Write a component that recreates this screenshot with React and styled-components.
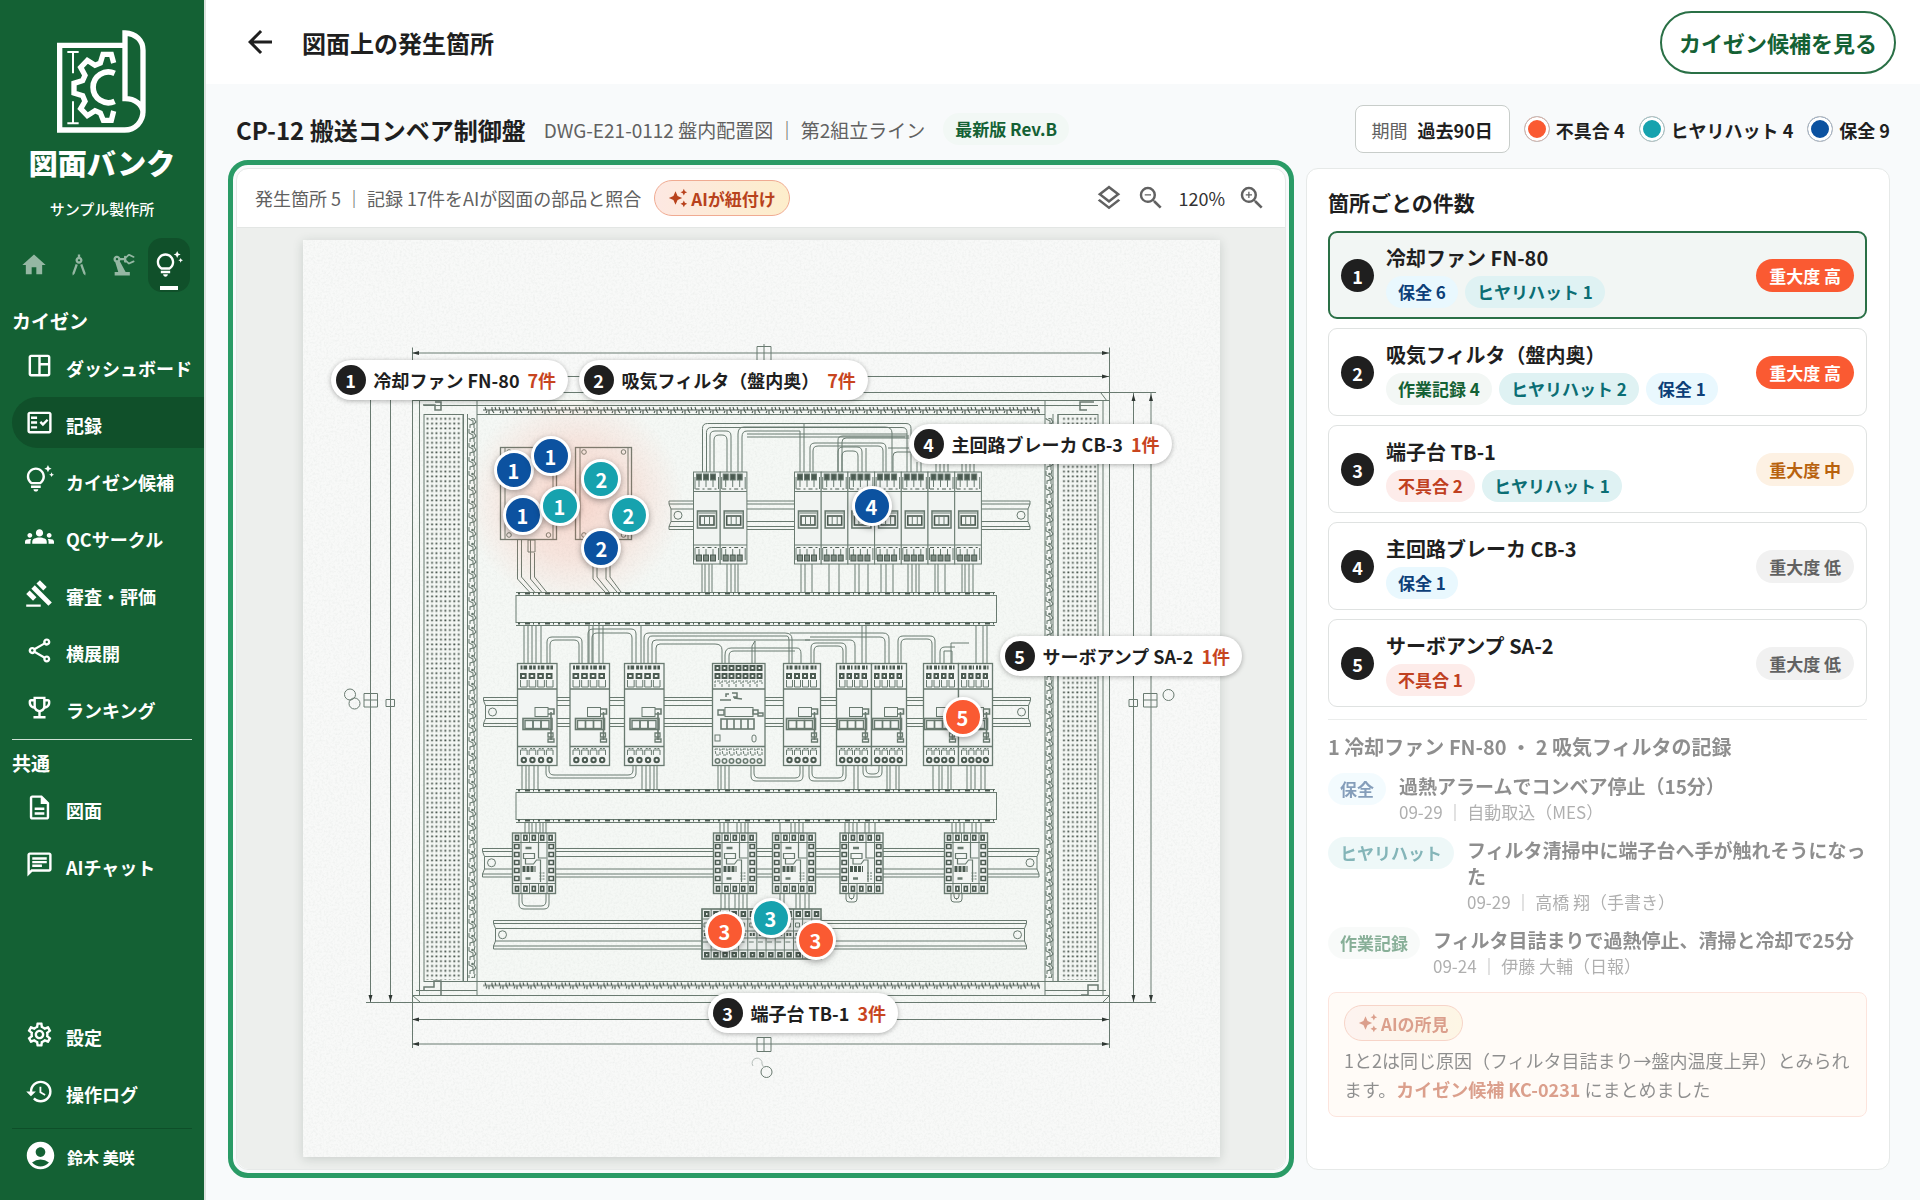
import React from 'react';
import styled, { createGlobalStyle, css } from 'styled-components';
import {
  MdAccountCircle,
  MdArchitecture,
  MdArrowBack,
  MdAutoAwesome,
  MdGavel,
  MdGroups,
  MdHistory,
  MdHome,
  MdOutlineChat,
  MdOutlineDescription,
  MdOutlineEmojiEvents,
  MdOutlineFactCheck,
  MdOutlineLayers,
  MdOutlineSettings,
  MdOutlineShare,
  MdOutlineSpaceDashboard,
  MdOutlineTipsAndUpdates,
  MdPrecisionManufacturing,
  MdZoomIn,
  MdZoomOut
} from 'react-icons/md';

const GlobalStyle = createGlobalStyle`
  *, *::before, *::after {
    box-sizing: border-box;
  }
  body {
    margin: 0;
    background: #f8fafb;
    color: #1f1f1f;
    font-family: 'Noto Sans CJK JP', 'Noto Sans', sans-serif;
    font-size: 18px;
  }
  button {
    font: inherit;
    color: inherit;
    cursor: pointer;
  }
  a {
    color: inherit;
    text-decoration: none;
  }
  h1, h2, h3, p, ul {
    margin: 0;
    padding: 0;
  }
  ul {
    list-style: none;
  }
`;

const kindColors = {
  defect: { solid: '#fa5a32', text: '#c0401f', soft: '#fdecea' },
  nearMiss: { solid: '#17a2ae', text: '#0b6e74', soft: '#dff2f3' },
  upkeep: { solid: '#0c52a0', text: '#0d3f78', soft: '#e9f8fe' },
  work: { solid: '#146134', text: '#146134', soft: '#f3f7f5' }
};

const severityColors = {
  high: { text: '#ffffff', back: '#fa5a32' },
  mid: { text: '#b8620e', back: '#fdf1e3' },
  low: { text: '#616161', back: '#f1f1f1' }
};

const Shell = styled.div`
  display: grid;
  grid-template-columns: 206px minmax(0, 1fr);
  min-height: 100vh;
`;

/* ---------- sidebar ---------- */

const Sidebar = styled.aside`
  display: flex;
  flex-direction: column;
  border-right: 2px solid #dde2df;
  background: #146134;
  color: #ffffff;
`;

const Brand = styled.div`
  display: flex;
  flex-direction: column;
  align-items: center;
  padding-top: 29px;
`;

const BrandName = styled.div`
  margin-top: 7px;
  font-size: 29px;
  line-height: 40px;
  font-weight: 900;
`;

const Company = styled.div`
  margin-top: 12px;
  font-size: 15px;
  line-height: 30px;
  font-weight: 500;
`;

const AreaTabs = styled.nav`
  display: flex;
  justify-content: space-between;
  align-items: center;
  margin-top: 14px;
  padding: 0 14px 0 13px;
`;

const AreaTab = styled.a`
  display: flex;
  align-items: center;
  justify-content: center;
  width: 42px;
  height: 54px;
  border-radius: 14px;
  font-size: 28px;
  color: rgba(255, 255, 255, 0.55);

  ${({ $active }) =>
    $active &&
    css`
      background: linear-gradient(#ffffff, #ffffff) center 48px / 18px 4px no-repeat #10502a;
      color: #ffffff;
    `}
`;

const NavHeading = styled.h2`
  margin: ${({ $first }) => ($first ? '14px' : '0')} 0 4px;
  padding: 0 12px;
  font-size: 19px;
  line-height: 30px;
  font-weight: 700;
`;

const NavList = styled.ul`
  display: flex;
  flex-direction: column;
  gap: 6px;
  padding-left: 12px;
`;

const NavLink = styled.a`
  display: flex;
  align-items: center;
  gap: 12px;
  height: 51px;
  padding-left: 13px;
  border-radius: 26px 0 0 26px;
  white-space: nowrap;
  font-weight: 700;
  background: ${({ $active }) => ($active ? '#10502a' : 'transparent')};

  svg {
    flex: none;
    font-size: 29px;
  }
  span {
    padding-top: 4px;
  }
`;

const NavRule = styled.hr`
  width: calc(100% - 24px);
  margin: 6px 0 8px 12px;
  border: 0;
  border-top: 1px solid #cfe0d5;
`;

const SidebarFoot = styled.div`
  margin-top: auto;
  padding-bottom: 20px;
`;

const FootRule = styled(NavRule)`
  margin: 11px 0 1px 12px;
  border-top-color: #0e4f29;
`;

const UserLink = styled(NavLink)`
  height: 50px;
  margin-left: 12px;
  padding-left: 12px;
  gap: 10px;
  font-size: 16px;

  svg {
    font-size: 33px;
  }
`;

/* ---------- page frame ---------- */

const Page = styled.div`
  display: flex;
  flex-direction: column;
`;

const TopBar = styled.header`
  display: flex;
  align-items: center;
  gap: 24px;
  height: 84px;
  padding: 0 24px 0 36px;
  background: #ffffff;
`;

const TopTitle = styled.h1`
  flex: 1;
  font-size: 24px;
  font-weight: 700;
`;

const IconButton = styled.button`
  display: flex;
  padding: 0;
  border: 0;
  background: none;
  font-size: ${({ $size }) => $size}px;
`;

const OutlineButton = styled.button`
  height: 63px;
  padding: 0 17px;
  border: 2px solid #2a7046;
  border-radius: 32px;
  background: #ffffff;
  color: #146134;
  font-size: 22px;
  font-weight: 700;
`;

const Body = styled.main`
  flex: 1;
  display: flex;
  flex-direction: column;
  padding: 0 30px 30px;
`;

const TitleRow = styled.div`
  display: flex;
  align-items: center;
  justify-content: space-between;
  padding: 21px 0 15px;
`;

const TitleGroup = styled.div`
  display: flex;
  align-items: center;
  gap: 18px;
`;

const DrawingTitle = styled.h2`
  font-size: 24px;
  font-weight: 700;
`;

const DrawingMeta = styled.span`
  color: #616161;
  font-size: 19px;
`;

const RevPill = styled.span`
  padding: 0 12px;
  border-radius: 16px;
  background: #f2f8f5;
  color: #146134;
  font-size: 17px;
  line-height: 32px;
  font-weight: 700;
`;

const Filters = styled.div`
  display: flex;
  align-items: center;
  gap: 14px;
`;

const PeriodButton = styled.button`
  display: flex;
  align-items: center;
  gap: 10px;
  height: 48px;
  padding: 2px 16px 0;
  border: 1px solid #c8cdca;
  border-radius: 8px;
  background: #ffffff;
  font-weight: 700;

  span {
    color: #616161;
    font-weight: 400;
  }
`;

const LegendItem = styled.span`
  display: flex;
  align-items: center;
  gap: 6px;
  font-weight: 700;

  span {
    padding-top: 2px;
  }
`;

const LegendDot = styled.i`
  width: 26px;
  height: 26px;
  border: 1px solid #c0c0c0;
  border-radius: 50%;
  background: ${({ $kind }) => kindColors[$kind].solid};
  box-shadow: inset 0 0 0 3px #ffffff;
`;

const Columns = styled.div`
  flex: 1;
  display: grid;
  grid-template-columns: minmax(0, 1050fr) minmax(0, 584fr);
  gap: 20px;
`;

const Card = styled.section`
  border: 1px solid #e6e9e8;
  border-radius: 12px;
  background: #ffffff;
`;

/* ---------- drawing viewer ---------- */

const Viewer = styled(Card)`
  display: flex;
  flex-direction: column;
  outline: 5px solid #2a9b66;
  outline-offset: 3px;
`;

const ViewerBar = styled.div`
  display: flex;
  align-items: center;
  gap: 13px;
  height: 59px;
  padding: 0 18px;
  border-bottom: 1px solid #e3e6e4;
  color: #616161;
`;

const ViewerTools = styled.div`
  display: flex;
  align-items: center;
  gap: 12px;
  margin-left: auto;

  span {
    color: #333333;
  }
`;

const AiPill = styled.span`
  display: inline-flex;
  align-items: center;
  gap: 3px;
  height: 36px;
  padding: 0 13px;
  border: 1px solid #f0ab92;
  border-radius: 18px;
  background: linear-gradient(90deg, #fde8e2, #fdeecb);
  color: #b8421c;
  font-size: 17px;
  font-weight: 700;

  svg {
    font-size: 20px;
  }
`;

const Stage = styled.div`
  flex: 1;
  display: flex;
  justify-content: center;
  align-items: center;
  padding: 12px 0;
  border-radius: 0 0 12px 12px;
  background: #edefed;
`;

const Sheet = styled.div`
  position: relative;
  width: 87.5%;
  aspect-ratio: 1;
  background: #f8f9f8;
  box-shadow: 0 2px 10px rgba(40, 60, 50, 0.18);
`;

const DrawingSvg = styled.svg`
  display: block;
  width: 100%;
  height: 100%;
`;

const Pin = styled.button`
  position: absolute;
  width: 40px;
  height: 40px;
  padding: 0;
  border: 3px solid #ffffff;
  border-radius: 50%;
  background: ${({ $kind }) => kindColors[$kind].solid};
  box-shadow: 0 2px 6px rgba(0, 0, 0, 0.35);
  color: #ffffff;
  font-size: 20px;
  line-height: 36px;
  font-weight: 700;
  transform: translate(-50%, -50%);
`;

const Callout = styled.div`
  position: absolute;
  display: flex;
  align-items: center;
  gap: 8px;
  height: 40px;
  padding: 0 12px 0 5px;
  border-radius: 20px;
  background: #ffffff;
  box-shadow: 0 1px 5px rgba(0, 0, 0, 0.3);
  white-space: nowrap;
  font-weight: 700;

  em {
    color: #c8451f;
    font-style: normal;
  }
`;

const NumberBadge = styled.span`
  flex: none;
  width: ${({ $size }) => $size}px;
  height: ${({ $size }) => $size}px;
  border-radius: 50%;
  background: #1f1f1f;
  color: #ffffff;
  text-align: center;
  line-height: ${({ $size }) => $size + 1}px;
  font-weight: 700;
`;

/* ---------- side card ---------- */

const SideCard = styled(Card)`
  padding: 18px 22px 20px 21px;
`;

const SideTitle = styled.h2`
  font-size: 21px;
  line-height: 30px;
  font-weight: 700;
`;

const SpotList = styled.ul`
  display: flex;
  flex-direction: column;
  gap: 9px;
  margin-top: 14px;
`;

const SpotButton = styled.button`
  display: flex;
  align-items: center;
  gap: 12px;
  width: 100%;
  height: 88px;
  padding: 0 ${({ $active }) => ($active ? 11 : 12)}px;
  border: ${({ $active }) => ($active ? '2px solid #2a7046' : '1px solid #dfe2e1')};
  border-radius: 9px;
  background: ${({ $active }) => ($active ? '#f2f6f4' : '#ffffff')};
  text-align: left;
`;

const SpotText = styled.span`
  flex: 1;
  display: flex;
  flex-direction: column;
  gap: 3px;
`;

const SpotName = styled.span`
  font-size: 20px;
  line-height: 30px;
  font-weight: 700;
`;

const Tags = styled.span`
  display: flex;
  gap: 7px;
`;

const Tag = styled.span`
  flex: none;
  padding: 0 12px;
  border-radius: 16px;
  background: ${({ $kind }) => kindColors[$kind].soft};
  color: ${({ $kind }) => kindColors[$kind].text};
  font-size: 17px;
  line-height: 32px;
  font-weight: 700;
`;

const Severity = styled.span`
  padding: 0 13px;
  border-radius: 17px;
  background: ${({ $level }) => severityColors[$level].back};
  color: ${({ $level }) => severityColors[$level].text};
  font-size: 17px;
  line-height: 33px;
  font-weight: 700;
`;

const Detail = styled.div`
  margin-top: 12px;
  border-top: 1px solid #d9dcdb;
  opacity: 0.5;
`;

const DetailTitle = styled.h3`
  margin-top: 12px;
  font-size: 20px;
  line-height: 30px;
  font-weight: 700;
`;

const Records = styled.ul`
  display: flex;
  flex-direction: column;
  gap: 13px;
  margin-top: 11px;
`;

const RecordRow = styled.li`
  display: flex;
  align-items: flex-start;
  gap: 13px;
`;

const RecordTitle = styled.p`
  font-size: 19px;
  line-height: 26px;
  font-weight: 700;
`;

const RecordMeta = styled.p`
  color: #616161;
  font-size: 17px;
  line-height: 25px;
`;

const AiNote = styled.div`
  margin-top: 14px;
  padding: 12px 14px 12px 15px;
  border: 1px solid #fbcabc;
  border-radius: 8px;
  background: #fff8f0;
`;

const AiNoteText = styled.p`
  margin-top: 5px;
  line-height: 29px;

  a {
    color: #b8421c;
    font-weight: 700;
  }
`;

/* ---------- drawing parts ---------- */

const LINE = '#697a70';
const INK = '#4b5a51';

// n values spaced evenly from start
const steps = (n, start, gap) => Array.from({ length: n }, (_, i) => start + i * gap);

function Wires({ xs, y1, y2 }) {
  return <path d={xs.map((x) => `M${x} ${y1}V${y2}`).join('')} />;
}

// Nested bridge of wires between two terminals, from outside in
function Bridge({ x1, x2, top, bottom, n = 2, gap = 4, r = 5 }) {
  return (
    <path
      d={steps(n, 0, gap)
        .map((o) => {
          const up = bottom > top ? 1 : -1;
          const t = top + o * up;
          return `M${x1 + o} ${bottom}V${t + r * up}Q${x1 + o} ${t} ${x1 + o + r} ${t}H${x2 - o - r}Q${x2 - o} ${t} ${x2 - o} ${t + r * up}V${bottom}`;
        })
        .join('')}
    />
  );
}

function Rail({ x1, x2, y, h }) {
  return (
    <g>
      <path
        d={`M${x1} ${y}H${x2}V${y + 3}L${x2 - 2} ${y + 8}V${y + h - 8}L${x2} ${y + h - 3}V${y + h}H${x1}V${y + h - 3}L${x1 + 2} ${y + h - 8}V${y + 8}L${x1} ${y + 3}Z`}
      />
      <path d={`M${x1} ${y + 3}H${x2}M${x1 + 2} ${y + 8}H${x2 - 2}M${x1 + 2} ${y + h - 8}H${x2 - 2}M${x1} ${y + h - 3}H${x2}`} />
      <circle cx={x1 + 9} cy={y + h / 2} r="4" />
      <circle cx={x2 - 9} cy={y + h / 2} r="4" />
    </g>
  );
}

function Duct({ y }) {
  return (
    <g>
      <rect x="516" y={y} width="480.5" height="27" />
      <path d={`M516 ${y - 3}H995M516 ${y + 30}H995`} />
      <path d={`M518 ${y - 2}H995M518 ${y + 28}H995`} stroke={INK} strokeWidth="2" strokeDasharray="2 5 5 3 1 4" />
    </g>
  );
}

function Breaker({ x }) {
  const cells = steps(3, x + 3, 7);
  return (
    <g>
      <rect x={x} y="472" width="26.7" height="92" fill="#f1f4f2" />
      <path d={`M${x} 491.5h26.7M${x} 545h26.7M${x + 1.5} 489v-12M${x + 25} 489v-12M${x + 1.5} 548v12M${x + 25} 548v12`} />
      {cells.map((cx) => (
        <g key={cx}>
          <rect x={cx} y="474" width="5" height="6" fill={INK} />
          <path d={`M${cx + 2.5} 480v7M${cx + 2.5} 549v6`} />
          <rect x={cx} y="555" width="5" height="6" fill="#7d8a82" stroke={INK} />
        </g>
      ))}
      <path d={`M${x + 2} 489h22M${x + 2} 547.5h22`} strokeDasharray="4 3 2 3" stroke={INK} />
      <rect x={x + 4} y="511" width="19" height="17" strokeWidth="1.6" />
      <rect x={x + 6.5} y="516" width="14" height="9" strokeWidth="1.6" stroke={INK} />
      <path d={`M${x + 5} 513h17M${x + 11} 516v9M${x + 16} 516v9`} />
    </g>
  );
}

function Relay({ x, w, n = 4 }) {
  const gap = (w - 5) / n;
  const cells = steps(n, x + 3, gap);
  const mid = x + w - 35;
  return (
    <g>
      <rect x={x} y="663.5" width={w} height="102" fill="#f2f5f3" strokeWidth="1.3" />
      <path d={`M${x} 689h${w}M${x} 746.5h${w}`} strokeWidth="1.4" />
      {cells.map((cx, i) => (
        <g key={cx}>
          <path d={`M${cx} 667.5h${gap - 2}`} strokeWidth="4" stroke={INK} strokeDasharray={i % 2 ? '3 1' : '2 1 4'} />
          <rect x={cx + 0.5} y="674" width={gap - 4} height="4" strokeWidth="2" stroke={INK} />
          <path d={`M${cx} 680v7h${gap - 2}v-7M${cx} 755v-5h${gap - 2}v5`} />
          <path d={`M${cx + 1} 748.5h${gap - 3}`} strokeDasharray="2 1" />
          <circle cx={cx + gap / 2 - 1} cy="760" r="2.2" strokeWidth="2" stroke={INK} />
        </g>
      ))}
      <rect x={mid + 13} y="707.5" width="13" height="9" />
      <path d={`M${mid + 26} 709h6v5h-6M${mid + 29} 712v28`} strokeWidth="1.6" />
      <rect x={mid + 1} y="718.5" width="29" height="11" strokeWidth="1.6" />
      <rect x={mid + 3} y="720.5" width="8" height="8" strokeWidth="1.4" />
      <rect x={mid + 11} y="720.5" width="8" height="8" strokeWidth="1.4" />
      <rect x={mid + 19} y="720.5" width="8" height="8" strokeWidth="1.4" />
      <path d={`M${mid + 26} 733h5v4h-5zM${mid + 26} 739h6v3h-6z`} strokeWidth="1.3" />
    </g>
  );
}

function Controller() {
  return (
    <g>
      <rect x="712.5" y="663.5" width="52.5" height="102" fill="#f2f5f3" strokeWidth="1.3" />
      <path d="M712.5 689h52.5M712.5 746.5h52.5" strokeWidth="1.4" />
      {steps(7, 715, 7).map((cx) => (
        <g key={cx}>
          <rect x={cx + 0.5} y="666" width="4" height="4" strokeWidth="2" stroke={INK} />
          <rect x={cx + 0.5} y="674" width="4" height="4" strokeWidth="2" stroke={INK} />
          <path d={`M${cx} 687v-6h5v3M${cx} 749h5v6h-4z`} strokeDasharray="3 1" />
          <circle cx={cx + 2.5} cy="761" r="2.2" strokeWidth="1.6" />
        </g>
      ))}
      <path d="M726 697v-3h3M732 693h5v4h-4M720 700h11M734 698l8 1" strokeWidth="1.5" />
      <rect x="725" y="707.5" width="28" height="9" />
      <path d="M718 710h6v5h-6zM753 710h5v4h-5zM758 713h5v3h-5z" strokeWidth="1.4" />
      <rect x="721" y="719" width="33" height="10" strokeWidth="1.6" />
      <path d="M727 719v10M734 719v10M741 719v10M748 719v10" strokeWidth="1.6" />
      <rect x="715" y="735" width="5" height="6" />
      <rect x="752" y="735" width="4" height="7" rx="2" />
    </g>
  );
}

function Timer({ x }) {
  const cells = steps(5, x + 2, 8.4);
  return (
    <g>
      <rect x={x} y="833" width="43" height="60.5" fill="#f2f5f3" strokeWidth="1.4" />
      <path d={`M${x} 842.5h43M${x} 883.5h43M${x + 8.5} 833v60.5M${x + 34.5} 833v60.5M${x + 17} 833v9.5M${x + 26} 833v9.5M${x + 17} 883.5v10M${x + 26} 883.5v10`} />
      {cells.map((cx) => (
        <g key={cx} strokeWidth="1.7" stroke={INK}>
          <rect x={cx + 1} y="835.5" width="3" height="4.5" />
          <rect x={cx + 1} y="886.5" width="3" height="4.5" />
        </g>
      ))}
      {steps(5, 844.5, 8).map((cy) => (
        <g key={cy} strokeWidth="1.5" stroke={INK}>
          <rect x={x + 2} y={cy} width="4.5" height="4" />
          <rect x={x + 36.5} y={cy} width="4.5" height="4" />
        </g>
      ))}
      <path d={`M${x + 13} 848h6M${x + 13} 878.5h5`} strokeWidth="2.5" />
      <path d={`M${x + 11} 853.5h11v5h-11zM${x + 13} 859v5h8l3-4h4v22M${x + 26} 843v15h8`} strokeWidth="1.2" />
      <path d={`M${x + 10} 869h13`} stroke={INK} strokeWidth="6" strokeDasharray="3 1" />
      <path d={`M${x + 27} 873h6M${x + 27} 876h6M${x + 27} 879h6`} strokeDasharray="2 1" />
    </g>
  );
}

function TerminalBlock() {
  const cells = steps(13, 702, 9.15);
  return (
    <g>
      <rect x="702" y="909" width="119" height="50" fill="#e9edeb" strokeWidth="1.6" />
      <path d="M702 919h119M702 931h119M702 938h119M702 950h119" />
      {cells.map((x) => (
        <g key={x}>
          <path d={`M${x} 909v50M${x + 2} 923h4v4h-4zM${x + 1} 942h5`} />
          <rect x={x + 3} y="912" width="3.5" height="4" strokeWidth="2" stroke={INK} />
          <rect x={x + 3} y="953" width="3.5" height="3.5" strokeWidth="2" stroke={INK} />
          <path d={`M${x + 2} 934.5h6`} strokeWidth="3" stroke={INK} strokeDasharray="2 1" />
        </g>
      ))}
    </g>
  );
}

function Plate({ x }) {
  return (
    <g>
      <rect x={x} y="447.5" width="56" height="92" strokeWidth="1.3" />
      <path d={`M${x + 4.5} 447.5v92M${x + 52.5} 447.5v92`} />
      {[
        [8.5, 452],
        [48, 452],
        [8.5, 535],
        [48, 535]
      ].map(([dx, cy]) => (
        <circle key={`${dx}-${cy}`} cx={x + dx} cy={cy} r="2.3" />
      ))}
    </g>
  );
}

// Dimension arrow heads: dir is r, l, u or d
function Head({ x, y, dir }) {
  const shapes = {
    l: 'l7 -2v4z',
    r: 'l-7 -2v4z',
    u: 'l-2 7h4z',
    d: 'l-2 -7h4z'
  };
  return <path d={`M${x} ${y}${shapes[dir]}`} fill="#2f3733" stroke="none" />;
}

function PanelDrawing() {
  return (
    <DrawingSvg viewBox="303 240 917 917" role="img" aria-label="盤内配置図">
      <defs>
        <filter id="grain" x="0" y="0" width="100%" height="100%">
          <feTurbulence type="fractalNoise" baseFrequency="0.45" numOctaves="3" seed="4" />
          <feColorMatrix values="0 0 0 0 0.35  0 0 0 0 0.4  0 0 0 0 0.37  0.7 0 0 0 -0.28" />
        </filter>
        <radialGradient id="heat">
          <stop offset="0" stopColor="#ff6a4a" stopOpacity="0.24" />
          <stop offset="0.55" stopColor="#ff7a5c" stopOpacity="0.15" />
          <stop offset="1" stopColor="#ff8a70" stopOpacity="0" />
        </radialGradient>
        <pattern id="holes" x="425.5" y="416.5" width="4.45" height="4.8" patternUnits="userSpaceOnUse">
          <rect x="1.2" y="1.4" width="1.8" height="1.8" fill="#46534b" />
        </pattern>
        <pattern id="slotsV" x="468" y="414" width="9" height="14" patternUnits="userSpaceOnUse">
          <path d="M1 1v4l4 2v3l-3 1v3M7 0l-1 5 2 3-2 2v4" fill="none" stroke={LINE} strokeWidth="1.1" />
          <circle cx="4.5" cy="4" r="1.3" fill={LINE} />
        </pattern>
        <pattern id="slotsV2" x="1045" y="414" width="9" height="14" patternUnits="userSpaceOnUse">
          <path d="M1 1v4l4 2v3l-3 1v3M7 0l-1 5 2 3-2 2v4" fill="none" stroke={LINE} strokeWidth="1.1" />
          <circle cx="4.5" cy="4" r="1.3" fill={LINE} />
        </pattern>
        <pattern id="slotsH" x="483" y="406" width="14" height="8" patternUnits="userSpaceOnUse">
          <path d="M0 4h14M2 1l1 3M6 4v4M9 1v3l2 3M12 1l1 3M4 5l-1 2" fill="none" stroke={INK} strokeWidth="1.1" />
        </pattern>
        <pattern id="slotsH2" x="483" y="981.5" width="14" height="8" patternUnits="userSpaceOnUse">
          <path d="M0 4h14M2 1l1 3M6 4v4M9 1v3l2 3M12 1l1 3M4 5l-1 2" fill="none" stroke={INK} strokeWidth="1.1" />
        </pattern>
      </defs>

      <rect x="412" y="393" width="698" height="609" fill="#f3f6f4" opacity="0.6" />
      <rect x="303" y="240" width="917" height="917" filter="url(#grain)" opacity="0.3" />

      <g fill="none" stroke={LINE} strokeWidth="1">
        {/* dimensions */}
        <path d="M412.5 347.5V1048M1109.5 347.5V1048" />
        <path d="M412 353H1110M412 376.5H1110M366 392.5H1156M366 1002.5H1156M412 1019.5H1110M412 1044H1110" />
        <path d="M370.5 393V1002M390.5 393V1002M1133.5 393V1002M1151 393V1002" />
        <path d="M757 366V346.5H771V366M764 344V366M757 1037.5H771V1051.5H757ZM764 1037V1052" />
        <circle cx="766.5" cy="1072" r="5.5" />
        <path d="M753 1066a5 5 0 1 1 9 -2l2 4" stroke="#b5bdb9" />
        <circle cx="350" cy="694.5" r="5.5" />
        <circle cx="354.5" cy="703.5" r="5.5" />
        <path d="M364 693.5h13.5v13.5h-13.5zM364 700h13.5M386 699.5h8.5v7h-8.5z" />
        <path d="M1143.5 693.5h13.5v13.5h-13.5zM1143.5 700h13.5M1129 699.5h8.5v7h-8.5z" />
        <circle cx="1168.5" cy="695" r="5.5" />

        {/* cabinet */}
        <path d="M412 400.5H1110M1101 393l6 8M412 995.5H1110M419.5 400V995M1103 400V995M416 990.5H477M1045 990.5H1106M424 981.5H1098M477 414.5H1045" />
        <path d="M424 405.5H1098M463.5 414V981M467.5 414V981M477 400V995M1045 400V995M1053 414V981M1058 414V981" />
        <rect x="424" y="414.5" width="39" height="567" />
        <rect x="1058" y="414.5" width="40" height="567" />
        <rect x="426" y="417" width="35.6" height="563" fill="url(#holes)" stroke="none" />
        <rect x="1061" y="417" width="35.6" height="563" fill="url(#holes)" stroke="none" />
        <rect x="468" y="418" width="9" height="560" fill="url(#slotsV)" stroke="none" />
        <rect x="1045" y="418" width="9" height="560" fill="url(#slotsV2)" stroke="none" />
        <rect x="483" y="406" width="557" height="8" fill="url(#slotsH)" stroke="none" />
        <rect x="483" y="981.5" width="557" height="8" fill="url(#slotsH2)" stroke="none" />
        <path d="M423 405h12v5h6v-8h-6M1094 402h-14v8h7M424 990v-3h10v-6h7v14M1098 990v-5h-10v10h-7" strokeWidth="1.5" />
        <path d="M412 995l8 7M1110 995l-7 7" />

        {/* fan plates and their leads */}
        <Plate x={500.5} />
        <Plate x={575.5} />
        <path d="M517.5 540v39l12 13M521.5 540v37l13 15M530.5 540v39l11 13M534.5 553v24l12 15M528 540h7v12h-7z" />
        <path d="M593 565v14l12 13M597 565v12l12 15M606 565v14l11 13M610 565v12l11 15" />

        {/* first rail */}
        <Rail x1={669} x2={1030} y={501} h={28.5} />
        <Bridge x1={702.5} x2={911} top={423.5} bottom={472} n={2} gap={4} />
        <Bridge x1={710} x2={731} top={431} bottom={472} n={2} gap={4} />
        <path d="M738 472V434Q738 427 744 427H885Q892 427 892 433V472M742 472V437Q742 431 747 431H800M800 431V472M804 424V472M747 434H907M747 437H905" />
        <Bridge x1={810} x2={886} top={443} bottom={472} n={2} gap={3} />
        <Bridge x1={838} x2={862} top={447} bottom={472} n={2} gap={4} />
        <path d="M842 472V442Q842 438 846 438H909M838 472V440Q838 436 843 436H909M893 472V456Q893 452 897 452H911M888 448H909M866 472V448" />
        <Wires xs={[917, 921, 936, 940, 944, 948, 962, 966, 970, 974]} y1={462} y2={472} />
        {steps(2, 693.5, 26.7).map((x) => (
          <Breaker key={x} x={x} />
        ))}
        {steps(7, 794.5, 26.7).map((x) => (
          <Breaker key={x} x={x} />
        ))}
        <Wires xs={[702, 705, 709, 712, 727, 731, 735, 738]} y1={564} y2={592} />
        <Wires
          xs={[801, 805, 812, 829, 839, 855, 859, 868, 881, 886, 893, 908, 912, 916, 919, 935, 938, 945, 962, 965, 969, 973]}
          y1={564}
          y2={592}
        />
        <Duct y={595.5} />

        {/* second rail */}
        <Wires xs={[524, 528, 532, 536, 541, 589, 593, 599, 603, 641]} y1={625} y2={664} />
        <Bridge x1={547} x2={582} top={637} bottom={664} n={2} gap={3} />
        <Bridge x1={588} x2={636} top={629} bottom={664} n={2} gap={4} />
        <path d="M644 664V638Q644 633 649 633H785Q792 633 792 639V664M648 664V641Q648 636 652 636H787Q789 636 789 640V664M652 664V644Q652 640 656 640H810M656 664V648Q656 644 660 644H715Q722 644 722 650V664" />
        <path d="M725 664V655Q725 648 731 648H797Q801 648 801 654V664M729 664V656Q729 651 734 651H795M752 664V646l3 -5v23M790 633H883Q889 633 889 639V664M810 637H880Q885 637 885 642V664M805 640H850Q855 640 855 646V664" />
        <Bridge x1={811} x2={846} top={643} bottom={664} n={2} gap={3} />
        <Bridge x1={898} x2={935} top={636} bottom={664} n={2} gap={3} />
        <path d="M862 625V664M866 625V664M940 664V652Q940 647 945 647H955M944 664V651H952V664M951 664V643H969M976 625V664M983 625V664M987 625V664" />
        <Rail x1={483.5} x2={1030.5} y={697.5} h={29} />
        <Relay x={517.5} w={39.5} />
        <Relay x={570} w={39.5} />
        <Relay x={624.5} w={39.5} />
        <Controller />
        <Relay x={783.5} w={37} />
        <Relay x={836.5} w={35} />
        <Relay x={871.5} w={35} />
        <Relay x={923.5} w={35} />
        <Relay x={958.5} w={34} />
        <Bridge x1={546} x2={636} top={778} bottom={766} n={2} gap={3} />
        <Bridge x1={751} x2={803} top={781} bottom={766} n={2} gap={3} />
        <Bridge x1={809} x2={846} top={781} bottom={766} n={2} gap={3} />
        <Bridge x1={863} x2={882} top={777} bottom={766} n={2} gap={3} />
        <Wires xs={[522, 526, 529, 534, 538, 642, 646, 650, 654, 657, 718, 721, 725, 729, 854, 858]} y1={766} y2={790} />
        <Wires xs={[887, 890, 896, 899, 933, 939, 942, 948, 951, 967, 971, 975, 981, 985]} y1={766} y2={790} />
        <Duct y={792.5} />

        {/* third rail */}
        <Wires xs={[525, 529, 532, 536, 540, 543, 546, 720, 724, 728, 737, 741, 745, 748, 780, 791, 795, 799, 803]} y1={823} y2={833} />
        <Wires xs={[845, 849, 853, 857, 865, 869, 875, 952, 956, 960, 964, 972, 976, 981]} y1={823} y2={833} />
        <Rail x1={482.5} x2={1039} y={848.5} h={28.5} />
        {[512.5, 713.5, 772.5, 840, 944.5].map((x) => (
          <Timer key={x} x={x} />
        ))}
        <Bridge x1={519} x2={549} top={909} bottom={894} n={2} gap={3} />
        <Bridge x1={846} x2={857} top={902} bottom={894} n={2} gap={3} r={3} />
        <Bridge x1={951} x2={962} top={902} bottom={894} n={2} gap={3} r={3} />
        <Wires xs={[721, 725, 729, 735, 739, 743, 747, 780, 784, 796, 800, 805, 809]} y1={894} y2={909} />

        {/* fourth rail */}
        <Rail x1={493.5} x2={1026.5} y={920.5} h={28.5} />
        <TerminalBlock />
      </g>

      <Head x={412} y={353} dir="l" />
      <Head x={1109} y={353} dir="r" />
      <Head x={1109} y={376.5} dir="r" />
      {[1019.5, 1044].map((y) => (
        <g key={y}>
          <Head x={412} y={y} dir="l" />
          <Head x={1109} y={y} dir="r" />
        </g>
      ))}
      {[1133.5, 1151].map((x) => (
        <Head key={x} x={x} y={394} dir="u" />
      ))}
      {[370.5, 390.5, 1133.5, 1151].map((x) => (
        <Head key={x} x={x} y={1002} dir="d" />
      ))}

      <ellipse cx="574" cy="500" rx="110" ry="106" fill="url(#heat)" />
    </DrawingSvg>
  );
}

function Logo() {
  return (
    <svg width="92" height="106" viewBox="168 88 276 318" fill="none" stroke="#ffffff" aria-hidden="true">
      <path
        d="M370 137H179V391H374C406 391 429 366 429 335V152C429 122 408 102 375 100V297C404 297 429 314 429 340"
        strokeWidth="16"
      />
      <path
        d="M341 190L334 164H309L301 190L285 197L262 182L242 203L255 227L248 243L222 251V280L248 288L255 305L242 327L262 348L285 333L301 340L310 362H334L341 334"
        strokeWidth="16"
      />
      <path d="M344 221A46 46 0 1 0 344 305" strokeWidth="17" />
      <path d="M202 157H236M219 157V221M219 305V371M202 371H236" strokeWidth="6" />
    </svg>
  );
}

/* ---------- data ---------- */

const areas = [
  { label: 'ホーム', icon: MdHome },
  { label: '設計', icon: MdArchitecture },
  { label: '製造', icon: MdPrecisionManufacturing },
  { label: 'カイゼン', icon: MdOutlineTipsAndUpdates, active: true }
];

const kaizenLinks = [
  { label: 'ダッシュボード', icon: MdOutlineSpaceDashboard },
  { label: '記録', icon: MdOutlineFactCheck, active: true },
  { label: 'カイゼン候補', icon: MdOutlineTipsAndUpdates },
  { label: 'QCサークル', icon: MdGroups },
  { label: '審査・評価', icon: MdGavel },
  { label: '横展開', icon: MdOutlineShare },
  { label: 'ランキング', icon: MdOutlineEmojiEvents }
];

const commonLinks = [
  { label: '図面', icon: MdOutlineDescription },
  { label: 'AIチャット', icon: MdOutlineChat }
];

const footLinks = [
  { label: '設定', icon: MdOutlineSettings },
  { label: '操作ログ', icon: MdHistory }
];

const legend = [
  { kind: 'defect', label: '不具合 4' },
  { kind: 'nearMiss', label: 'ヒヤリハット 4' },
  { kind: 'upkeep', label: '保全 9' }
];

// Positions are in sheet units, SHEET wide and high
const SHEET = 917;

const pins = [
  { no: 1, kind: 'upkeep', x: 211, y: 230 },
  { no: 1, kind: 'upkeep', x: 248, y: 216 },
  { no: 1, kind: 'upkeep', x: 220, y: 275 },
  { no: 1, kind: 'nearMiss', x: 257, y: 266 },
  { no: 2, kind: 'nearMiss', x: 299, y: 239 },
  { no: 2, kind: 'nearMiss', x: 326, y: 275 },
  { no: 2, kind: 'upkeep', x: 299, y: 308 },
  { no: 4, kind: 'upkeep', x: 569, y: 266 },
  { no: 5, kind: 'defect', x: 660, y: 477 },
  { no: 3, kind: 'defect', x: 422, y: 691 },
  { no: 3, kind: 'nearMiss', x: 468, y: 678 },
  { no: 3, kind: 'defect', x: 513, y: 700 }
];

const callouts = [
  { no: 1, name: '冷却ファン FN-80', count: '7件', x: 28, y: 120 },
  { no: 2, name: '吸気フィルタ（盤内奥）', count: '7件', x: 276, y: 120 },
  { no: 4, name: '主回路ブレーカ CB-3', count: '1件', x: 606, y: 184 },
  { no: 5, name: 'サーボアンプ SA-2', count: '1件', x: 697, y: 396 },
  { no: 3, name: '端子台 TB-1', count: '3件', x: 405, y: 753 }
];

const spots = [
  {
    name: '冷却ファン FN-80',
    tags: [['upkeep', '保全 6'], ['nearMiss', 'ヒヤリハット 1']],
    level: 'high',
    severity: '重大度 高'
  },
  {
    name: '吸気フィルタ（盤内奥）',
    tags: [['work', '作業記録 4'], ['nearMiss', 'ヒヤリハット 2'], ['upkeep', '保全 1']],
    level: 'high',
    severity: '重大度 高'
  },
  {
    name: '端子台 TB-1',
    tags: [['defect', '不具合 2'], ['nearMiss', 'ヒヤリハット 1']],
    level: 'mid',
    severity: '重大度 中'
  },
  { name: '主回路ブレーカ CB-3', tags: [['upkeep', '保全 1']], level: 'low', severity: '重大度 低' },
  { name: 'サーボアンプ SA-2', tags: [['defect', '不具合 1']], level: 'low', severity: '重大度 低' }
];

const records = [
  { kind: 'upkeep', tag: '保全', title: '過熱アラームでコンベア停止（15分）', meta: '09-29 ｜ 自動取込（MES）' },
  {
    kind: 'nearMiss',
    tag: 'ヒヤリハット',
    title: 'フィルタ清掃中に端子台へ手が触れそうになった',
    meta: '09-29 ｜ 高橋 翔（手書き）'
  },
  {
    kind: 'work',
    tag: '作業記録',
    title: 'フィルタ目詰まりで過熱停止、清掃と冷却で25分',
    meta: '09-24 ｜ 伊藤 大輔（日報）'
  }
];

const place = ({ x, y }) => ({ left: `${(x / SHEET) * 100}%`, top: `${(y / SHEET) * 100}%` });

/* ---------- page ---------- */

function NavGroup({ links }) {
  return (
    <NavList>
      {links.map(({ label, icon: Icon, active }) => (
        <li key={label}>
          <NavLink href="#" $active={active}>
            <Icon />
            <span>{label}</span>
          </NavLink>
        </li>
      ))}
    </NavList>
  );
}

function SideNav() {
  return (
    <Sidebar>
      <Brand>
        <Logo />
        <BrandName>図面バンク</BrandName>
        <Company>サンプル製作所</Company>
      </Brand>
      <AreaTabs>
        {areas.map(({ label, icon: Icon, active }) => (
          <AreaTab key={label} href="#" aria-label={label} $active={active}>
            <Icon />
          </AreaTab>
        ))}
      </AreaTabs>
      <NavHeading $first>カイゼン</NavHeading>
      <NavGroup links={kaizenLinks} />
      <NavRule />
      <NavHeading>共通</NavHeading>
      <NavGroup links={commonLinks} />
      <SidebarFoot>
        <NavGroup links={footLinks} />
        <FootRule />
        <UserLink href="#">
          <MdAccountCircle />
          <span>鈴木 美咲</span>
        </UserLink>
      </SidebarFoot>
    </Sidebar>
  );
}

function DrawingViewer() {
  return (
    <Viewer>
      <ViewerBar>
        <span>発生箇所 5 ｜ 記録 17件をAIが図面の部品と照合</span>
        <AiPill>
          <MdAutoAwesome />
          AIが紐付け
        </AiPill>
        <ViewerTools>
          <IconButton $size={30} aria-label="レイヤー">
            <MdOutlineLayers />
          </IconButton>
          <IconButton $size={30} aria-label="縮小">
            <MdZoomOut />
          </IconButton>
          <span>120%</span>
          <IconButton $size={30} aria-label="拡大">
            <MdZoomIn />
          </IconButton>
        </ViewerTools>
      </ViewerBar>
      <Stage>
        <Sheet>
          <PanelDrawing />
          {pins.map((pin) => (
            <Pin key={`${pin.x}-${pin.y}`} $kind={pin.kind} style={place(pin)}>
              {pin.no}
            </Pin>
          ))}
          {callouts.map((callout) => (
            <Callout key={callout.no} style={place(callout)}>
              <NumberBadge $size={30}>{callout.no}</NumberBadge>
              <span>{callout.name}</span>
              <em>{callout.count}</em>
            </Callout>
          ))}
        </Sheet>
      </Stage>
    </Viewer>
  );
}

function SpotPanel() {
  return (
    <SideCard>
      <SideTitle>箇所ごとの件数</SideTitle>
      <SpotList>
        {spots.map((spot, i) => (
          <li key={spot.name}>
            <SpotButton $active={i === 0}>
              <NumberBadge $size={33}>{i + 1}</NumberBadge>
              <SpotText>
                <SpotName>{spot.name}</SpotName>
                <Tags>
                  {spot.tags.map(([kind, label]) => (
                    <Tag key={label} $kind={kind}>
                      {label}
                    </Tag>
                  ))}
                </Tags>
              </SpotText>
              <Severity $level={spot.level}>{spot.severity}</Severity>
            </SpotButton>
          </li>
        ))}
      </SpotList>
      <Detail>
        <DetailTitle>1 冷却ファン FN-80 ・ 2 吸気フィルタの記録</DetailTitle>
        <Records>
          {records.map((record) => (
            <RecordRow key={record.title}>
              <Tag $kind={record.kind}>{record.tag}</Tag>
              <div>
                <RecordTitle>{record.title}</RecordTitle>
                <RecordMeta>{record.meta}</RecordMeta>
              </div>
            </RecordRow>
          ))}
        </Records>
        <AiNote>
          <AiPill>
            <MdAutoAwesome />
            AIの所見
          </AiPill>
          <AiNoteText>
            1と2は同じ原因（フィルタ目詰まり→盤内温度上昇）とみられます。<a href="#">カイゼン候補 KC-0231</a>{' '}
            にまとめました
          </AiNoteText>
        </AiNote>
      </Detail>
    </SideCard>
  );
}

export default function App() {
  return (
    <Shell>
      <GlobalStyle />
      <SideNav />
      <Page>
        <TopBar>
          <IconButton $size={36} aria-label="戻る">
            <MdArrowBack />
          </IconButton>
          <TopTitle>図面上の発生箇所</TopTitle>
          <OutlineButton>カイゼン候補を見る</OutlineButton>
        </TopBar>
        <Body>
          <TitleRow>
            <TitleGroup>
              <DrawingTitle>CP-12 搬送コンベア制御盤</DrawingTitle>
              <DrawingMeta>DWG-E21-0112 盤内配置図 ｜ 第2組立ライン</DrawingMeta>
              <RevPill>最新版 Rev.B</RevPill>
            </TitleGroup>
            <Filters>
              <PeriodButton>
                <span>期間</span>過去90日
              </PeriodButton>
              {legend.map(({ kind, label }) => (
                <LegendItem key={kind}>
                  <LegendDot $kind={kind} />
                  <span>{label}</span>
                </LegendItem>
              ))}
            </Filters>
          </TitleRow>
          <Columns>
            <DrawingViewer />
            <SpotPanel />
          </Columns>
        </Body>
      </Page>
    </Shell>
  );
}
